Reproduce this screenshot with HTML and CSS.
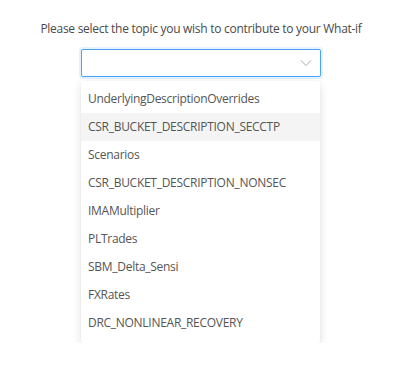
FILE: index.html
```html
<!DOCTYPE html>
<html>
<head>
<meta charset="utf-8">
<link rel="stylesheet" href="styles.css">
</head>
<body>
<div class="page">
  <p class="prompt">Please select the topic you wish to contribute to your What-if</p>
  <div class="combo">
    <div class="select">
      <svg class="chev" width="12" height="8" viewBox="0 0 12 8"><path d="M1 1.5 L6 6.5 L11 1.5" fill="none" stroke="#a8a8a8" stroke-width="1"/></svg>
    </div>
    <ul class="menu">
      <li>UnderlyingDescriptionOverrides</li>
      <li class="hover">CSR_BUCKET_DESCRIPTION_SECCTP</li>
      <li>Scenarios</li>
      <li>CSR_BUCKET_DESCRIPTION_NONSEC</li>
      <li>IMAMultiplier</li>
      <li>PLTrades</li>
      <li>SBM_Delta_Sensi</li>
      <li>FXRates</li>
      <li>DRC_NONLINEAR_RECOVERY</li>
    </ul>
  </div>
</div>
</body>
</html>
```
FILE: styles.css
```css
html, body { margin: 0; padding: 0; background: #fff; }
body { font-family: "Open Sans", "Noto Sans", sans-serif; font-size: 12px; color: #555; letter-spacing: -0.28px; }
.page { display: flex; flex-direction: column; align-items: center; padding-top: 21px; }
.prompt { margin: 0 3px 0 0; line-height: 16px; color: #4a4a4a; }
.combo { width: 240px; margin: 12px 3px 0 0; display: flex; flex-direction: column; }
.select { height: 28px; box-sizing: border-box; border: 1px solid #4ba3f7; border-radius: 2px; box-shadow: 0 0 0 2px rgba(75,163,247,0.15); display: flex; align-items: center; justify-content: flex-end; padding-right: 8px; }
.chev { display: block; }
.menu { list-style: none; margin: 4px 0 0; padding: 4px 0 6px; background: #fff; border-radius: 2px; box-shadow: 0 3px 10px rgba(0,0,0,0.12), 0 0 2px rgba(0,0,0,0.05); width: 239px; }
.menu li { height: 28px; line-height: 28px; padding-left: 7px; color: #555; white-space: nowrap; }
.menu li.hover { background: #f4f4f4; }
```
